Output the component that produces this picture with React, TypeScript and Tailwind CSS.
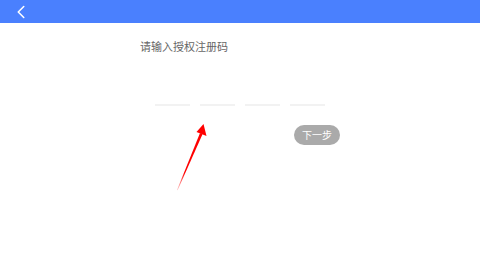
import { ChevronLeft } from "lucide-react";

const slots = [0, 1, 2, 3];

export default function App() {
  return (
    <div className="relative h-[270px] w-[480px] overflow-hidden bg-white font-['Noto_Sans_CJK_SC',sans-serif]">
      <header className="flex h-[23px] items-center bg-[#4a80fe] pl-[10px]">
        <ChevronLeft className="h-[22px] w-[22px] text-white" strokeWidth={1.7} />
      </header>

      <main className="mx-auto flex w-[200px] flex-col pt-[16px]">
        <p className="text-[11px] leading-[15px] text-[#666]">请输入授权注册码</p>

        <div className="mt-[50px] flex justify-center gap-[10px]">
          {slots.map((i) => (
            <div key={i} className="h-[2px] w-[35px] bg-[#f2f2f2]" />
          ))}
        </div>

        <div className="mt-[19px] flex justify-end">
          <button
            type="button"
            className="h-[20px] w-[46px] rounded-full bg-[#aaaaaa] text-[10px] leading-[20px] text-white"
          >
            下一步
          </button>
        </div>
      </main>

      <svg className="pointer-events-none absolute left-0 top-0" width="480" height="270">
        <defs>
          <linearGradient id="fade" x1="177" y1="190" x2="201" y2="131" gradientUnits="userSpaceOnUse">
            <stop offset="0" stopColor="#ff0000" stopOpacity="0.2" />
            <stop offset="0.3" stopColor="#ff0000" stopOpacity="1" />
          </linearGradient>
        </defs>
        <polygon points="177,190 200,133 202.5,134.2 177.6,190.3" fill="url(#fade)" />
        <polygon points="203.5,124 206.5,136 196.5,132" fill="#ff0000" />
      </svg>
    </div>
  );
}
